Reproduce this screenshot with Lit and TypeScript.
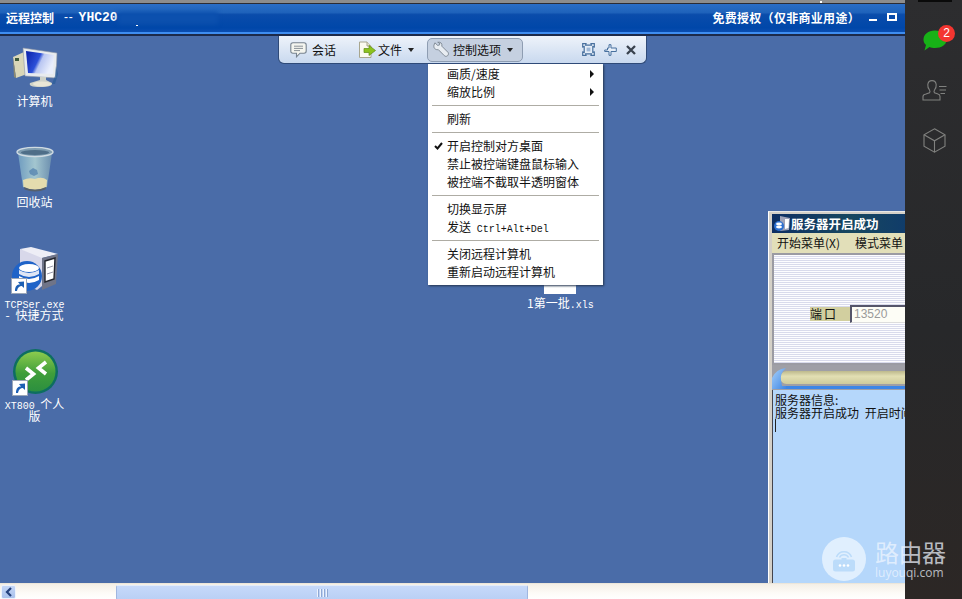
import { LitElement, html, css, svg } from "lit";
import { customElement } from "lit/decorators.js";

const shortcut = svg`
  <rect x="0.5" y="0.5" width="15" height="15" fill="#fff" stroke="#9aa6b8"/>
  <path d="M4 13 C4 8 6 6.5 9 6.5 L7 4 L13 3.5 L13 10 L10.8 8 C8.5 8 6.5 9.5 6 13 Z" fill="#1c5fb4"/>`;

const computerIcon = html`<svg width="46" height="42" viewBox="0 0 46 42">
  <defs>
    <linearGradient id="scr" x1="0" y1="0" x2="1" y2="0.4">
      <stop offset="0" stop-color="#0a1fa8"/><stop offset=".5" stop-color="#2c4fd8"/><stop offset=".62" stop-color="#b9c6f2"/><stop offset="1" stop-color="#e9eefc"/>
    </linearGradient>
  </defs>
  <path d="M1 11 L12 6 L15 28 L4 32 Z" fill="#d9d6b8"/>
  <path d="M1 11 L4 32 L2 31 Z" fill="#8d8a70"/>
  <rect x="3" y="12" width="4" height="3" fill="#3e5a3c"/>
  <path d="M11 2 L45 7 L44 32 L13 30 Z" fill="#e8ebee" stroke="#8d96a4" stroke-width=".6"/>
  <path d="M14 5 L42 9 L41 28 L16 27 Z" fill="url(#scr)"/>
  <path d="M28 31 L28 34 L18 37 Q16 41 28 41 Q41 41 40 37 L34 34 L34 31 Z" fill="#cfd2c8"/>
  <ellipse cx="30" cy="38" rx="9" ry="2.6" fill="#e9e6d6"/>
  <path d="M44 20 L46 28 L43 38 L40 38 L43 30 Z" fill="#2a5c98" opacity=".7"/>
</svg>`;

const binIcon = html`<svg width="38" height="47" viewBox="0 0 38 47">
  <defs>
    <linearGradient id="bin" x1="0" y1="0" x2="1" y2="0">
      <stop offset="0" stop-color="#6f9cc0"/><stop offset=".5" stop-color="#a3c6cf"/><stop offset="1" stop-color="#6b8eae"/>
    </linearGradient>
  </defs>
  <path d="M2 7 L7 41 Q19 47 31 41 L36 7 Z" fill="url(#bin)"/>
  <path d="M7 34 Q13 31 19 33 Q26 30 31 34 L30.5 41 Q19 47 7.5 41 Z" fill="#e4dcae"/>
  <path d="M8 41 Q19 46 30 41 L29.500 43.500 Q19 47.500 8.500 43.500 Z" fill="#56606c"/>
  <path d="M13 25 l4 -3 l4 2 l1 4 l-4 2 l-4 -2 Z" fill="#4f7dac" opacity=".7"/>
  <ellipse cx="19" cy="6" rx="18" ry="4.6" fill="#7f9db2" stroke="#d0dbe2" stroke-width="1.4"/>
  <ellipse cx="19" cy="6.5" rx="14" ry="2.6" fill="#4f6e88"/>
</svg>`;

const serverIcon = html`<svg width="50" height="50" viewBox="0 0 50 50">
  <path d="M11 3 L33 8 L33 40 L28 44 L11 36 Z" fill="#d8d8ea"/>
  <path d="M11 3 L22 1 L49 8 L33 12 Z" fill="#eeeef6"/>
  <path d="M33 12 L49 8 L47 38 L33 44 Z" fill="#6f7488"/>
  <path d="M36 15 L46 12 L45 33 L36 36 Z" fill="#fff" stroke="#23252e" stroke-width="1.4"/>
  <path d="M38 22 L44 20 M38 28 L44 26" stroke="#99a" stroke-width="1"/>
  <circle cx="18" cy="30" r="15" fill="#1f63c8"/>
  <ellipse cx="20" cy="22" rx="10" ry="4" fill="#fff"/>
  <path d="M10 24 Q20 30 30 24 V28 Q20 34 10 28 Z" fill="#dfe6f5"/>
  <path d="M10 30 Q20 36 30 30 V34 Q20 40 10 34 Z" fill="#fff"/>
  <g transform="translate(2 32)">${shortcut}</g>
</svg>`;

const xtIcon = html`<svg width="52" height="50" viewBox="0 0 52 50">
  <defs>
    <linearGradient id="xt" x1="0" y1="0" x2="0" y2="1">
      <stop offset="0" stop-color="#8ccb4e"/><stop offset=".55" stop-color="#3f9e3a"/><stop offset="1" stop-color="#2c8f3f"/>
    </linearGradient>
  </defs>
  <circle cx="27.500" cy="24.500" r="22.500" fill="#0d6e60"/>
  <circle cx="27.500" cy="24.500" r="20" fill="url(#xt)"/>
  <path d="M18 21 L25.500 27 L18 33" fill="none" stroke="#fff" stroke-width="3.600"/>
  <path d="M38 15 L30.500 21 L38 27" fill="none" stroke="#fff" stroke-width="3.600"/>
  <g transform="translate(4 33)">${shortcut}</g>
</svg>`;

const serverSmall = html`<svg width="17" height="17" viewBox="0 0 17 17">
  <path d="M6 1 L16 3 L15 15 L6 16 Z" fill="#9fa3b8"/>
  <path d="M11 4 L15 4 L14.5 13 L11 14 Z" fill="#fff"/>
  <circle cx="5" cy="11" r="5" fill="#2c6fd0"/>
  <ellipse cx="5" cy="9" rx="3" ry="1.4" fill="#fff"/>
  <ellipse cx="5" cy="12" rx="3" ry="1.4" fill="#fff"/>
</svg>`;

const chatIcon = html`<svg width="17" height="16" viewBox="0 0 17 16">
  <path d="M3 .8 H14 Q16.2 .8 16.2 3 V9 Q16.2 11.2 14 11.2 H10 L6.5 14.8 V11.2 H3 Q.8 11.2 .8 9 V3 Q.8 .8 3 .8 Z" fill="#f4f5ef" stroke="#77838f" stroke-width="1.1"/>
  <path d="M4 4.2 H13 M4 6.4 H13 M4 8.6 H10" stroke="#8a9298" stroke-width="1"/>
</svg>`;

const fileIcon = html`<svg width="18" height="18" viewBox="0 0 18 18">
  <path d="M1.5 1 H9 L13 5 V16.5 H1.5 Z" fill="#fbfaf0" stroke="#a8a68e"/>
  <path d="M9 1 V5 H13" fill="#e6e4d2" stroke="#a8a68e"/>
  <path d="M6 7.5 H11 V4.5 L17.5 9.5 L11 14.5 V11.5 H6 Z" fill="#8cc21e" stroke="#5e8c12" stroke-width=".7"/>
</svg>`;

const wrenchIcon = html`<svg width="16" height="17" viewBox="0 0 17 17">
  <path d="M2 1.4 L5 4.2 L7 3.6 L7 1.6 L5 .8 C8 .2 10 2 9.4 5 L16 11.6 C16.8 12.6 16.4 14.4 15.4 15.2 C14.4 16 12.8 16 12 15 L5.6 8.6 C2.6 9.2 .4 7 1 4 Z" fill="#e8edf2" stroke="#7d8792" stroke-width="1" stroke-linejoin="round"/>
</svg>`;

const fullIcon = html`<svg width="13" height="13" viewBox="0 0 13 13" fill="none" stroke="#48709e" stroke-width="1.2">
  <path d="M.7 .7 H4 L3.6 2.2 H9.4 L9 .7 H12.3 V4 L10.8 3.6 V9.4 L12.3 9 V12.3 H9 L9.4 10.8 H3.6 L4 12.3 H.7 V9 L2.2 9.4 V3.6 L.7 4 Z" fill="#e6eef8"/>
  <rect x="4.6" y="4.6" width="3.8" height="3.8" fill="#9db7d6" stroke="none"/>
</svg>`;

const pinIcon = html`<svg width="13" height="12" viewBox="0 0 13 12">
  <path d="M5 .7 H7 V4 H12.3 V7.5 H7 V11.3 H5 V7.5 L.7 7.5 V6 H3.5 V4 H5 Z" fill="#e6eef8" stroke="#48709e" stroke-width="1"/>
</svg>`;

const closeIcon = html`<svg width="10" height="10" viewBox="0 0 10 10">
  <path d="M1 1 L9 9 M9 1 L1 9" stroke="#39424e" stroke-width="2.3"/>
</svg>`;

const wechat = html`<svg width="24" height="21" viewBox="0 0 24 21">
  <path d="M12 .5 C19 .5 23.500 4.500 23.500 9.500 C23.500 15 18.500 18 12 18 C10 18 8 17.700 6.500 17 L1.500 20.500 L3 15 C1.200 13.500 .5 11.500 .5 9.500 C.5 4.500 5 .5 12 .5 Z" fill="#17b217"/>
</svg>`;

const contacts = html`<svg width="25" height="21" viewBox="0 0 25 21" fill="none" stroke="#80817f" stroke-width="1.1">
  <path d="M1 20 V16.500 Q1 14.500 4 14 L7.500 12.800 Q8.500 11.500 7.500 10 Q5.500 7.500 5.800 4.500 Q6.300 .6 10 .6 Q13.700 .6 14.200 4.500 Q14.500 7.500 12.500 10 Q11.500 11.500 12.500 12.800 L16 14 Q18 14.500 18 16.500 V20 Z"/>
  <path d="M17 6.500 H24.500 M17.500 10 H24 M18.500 13.500 H23"/>
</svg>`;

const cube = html`<svg width="23" height="25" viewBox="0 0 23 25" fill="none" stroke="#80817f" stroke-width="1.1">
  <path d="M11.500 .8 L22 6.800 V18.200 L11.500 24.200 L1 18.200 V6.800 Z"/>
  <path d="M1 6.800 L11.500 12.800 L22 6.800 M11.500 12.800 V24.200"/>
</svg>`;

const routerIcon = html`<svg width="28" height="28" viewBox="0 0 28 28" fill="none">
  <path d="M6.500 12 A8 8 0 0 1 21.500 12 M9.500 12.500 A5 5 0 0 1 18.500 12.500" stroke="#bcdcfa" stroke-width="1.600"/>
  <path d="M11.500 13 H16.500 V15 H11.500 Z" fill="#bcdcfa"/>
  <rect x="3" y="14.500" width="22" height="12" rx="2.500" fill="#bcdcfa"/>
  <circle cx="10" cy="20.500" r="1.300" fill="#fff"/><circle cx="14" cy="20.500" r="1.300" fill="#fff"/><circle cx="18" cy="20.500" r="1.300" fill="#fff"/>
</svg>`;

type MenuEntry = { sep: true } | { t: string; arrow?: boolean; check?: boolean; latin?: string };
const MENU: MenuEntry[] = [
  { t: "画质/速度", arrow: true },
  { t: "缩放比例", arrow: true },
  { sep: true },
  { t: "刷新" },
  { sep: true },
  { t: "开启控制对方桌面", check: true },
  { t: "禁止被控端键盘鼠标输入" },
  { t: "被控端不截取半透明窗体" },
  { sep: true },
  { t: "切换显示屏" },
  { t: "发送", latin: "Ctrl+Alt+Del" },
  { sep: true },
  { t: "关闭远程计算机" },
  { t: "重新启动远程计算机" },
];

const mono = (s: string) => html`<span class="mono">${s}</span>`;

const DESKTOP = [
  { ix: 12, y: 46, icon: computerIcon, lines: [html`计算机`], ly: 95 },
  { ix: 16, y: 146, icon: binIcon, lines: [html`回收站`], ly: 196 },
  { ix: 9, y: 246, icon: serverIcon, lines: [mono("TCPSer.exe"), html`- 快捷方式`], ly: 297 },
  { ix: 8, y: 347, icon: xtIcon, lines: [html`${mono("XT800")} 个人`, html`版`], ly: 398 },
];

@customElement("app-root")
export class AppRoot extends LitElement {
  static styles = css`
    :host { display: block; width: 962px; height: 599px; overflow: hidden; font-family: "Noto Sans CJK SC", "Liberation Sans", sans-serif; }
    .root { display: flex; width: 962px; height: 599px; position: relative; }
    .main { width: 905px; height: 599px; display: flex; flex-direction: column; position: relative; overflow: hidden; }
    .strip { height: 3px; background: #8d8d8d; border-bottom: 1px solid #2c2c34; flex: none; position: relative; }
    .strip::after { content: ""; position: absolute; left: 820px; top: 1px; width: 2px; height: 2px; background: #fff; }
    .titlebar {
      height: 30px; flex: none; display: flex; align-items: center; justify-content: space-between;
      padding: 0 8px 2px 6px; box-sizing: border-box; color: #fff; font-weight: 700; font-size: 12px;
      background: linear-gradient(#2b6ec6 0, #1f63bb 30%, #0a4cab 38%, #0047a9 85%, #0a4db0 100%);
      border-bottom: 2px solid #3f8df0; position: relative;
    }
    .underline { height: 2px; flex: none; background: #1c2a4a; }
    .smudge { position: absolute; left: 118px; top: 8px; width: 100px; height: 12px; background: #0c50ae; filter: blur(2px); }
    .speck { position: absolute; left: 136px; top: 21px; width: 2px; height: 1px; background: #fff; }
    .title-left { display: flex; align-items: center; }
    .dash { margin-left: 10px; font-family: "Liberation Sans", sans-serif; font-size: 12px; font-weight: 400; letter-spacing: .8px; }
    .yhc { margin-left: 5px; font-family: "Liberation Mono", monospace; font-size: 13px; }
    .title-right { display: flex; align-items: center; gap: 9px; }
    .title-right span { letter-spacing: .3px; }
    .winbtn { display: flex; align-items: center; gap: 10px; }
    .min { width: 8px; height: 2px; background: #fff; margin-top: 5px; }
    .max { width: 6px; height: 4px; border: 2px solid #fff; }
    .desktop { flex: 1; background: #4a6ca8; }
    .dimg { position: absolute; }
    .dlabel { position: absolute; left: 0; width: 69px; text-align: center; color: #fff; font-size: 12px; }
    .dline { height: 12px; line-height: 12px; white-space: pre; word-spacing: 3px; }
    .mono { font-family: "Liberation Mono", monospace; font-size: 10px; }
    .toolbar {
      position: absolute; left: 278px; top: 36px; width: 369px; height: 28px; box-sizing: border-box;
      background: linear-gradient(#eef3fa, #c9d9ef); border: 1px solid #2f4a78; border-top: 0;
      border-radius: 0 0 6px 6px; display: flex; align-items: center; padding: 0 10px 0 11px; font-size: 12px; color: #111;
    }
    .tool { display: flex; align-items: center; gap: 5px; }
    .tool.chat { width: 68px; }
    .tool.file { width: 69px; gap: 2px; }
    .tool.ctrl {
      width: 96px; height: 24px; box-sizing: border-box; padding-left: 5px; gap: 4px;
      background: #c5d0e0; border: 1px solid #8e9db2; border-radius: 5px;
    }
    .caret { width: 0; height: 0; border-left: 3.500px solid transparent; border-right: 3.500px solid transparent; border-top: 4px solid #222; margin-left: 4px; margin-top: 1px; }
    .ctrl .caret { margin-left: 2px; }
    .tool-right { margin-left: auto; display: flex; align-items: center; gap: 9px; }
    .menu {
      position: absolute; left: 428px; top: 64px; width: 175px; height: 221px; box-sizing: border-box;
      background: #fff; padding: 1px 4px 0 4px; font-size: 12px; color: #111;
      box-shadow: 1px 1px 2px #25364f;
    }
    .mi { height: 18px; position: relative; padding-left: 15px; line-height: 18px; white-space: pre; }
    .mi .mono { margin-left: 3px; }
    .sep { height: 9px; display: flex; align-items: center; }
    .sep::before { content: ""; height: 1px; flex: 1; background: #aeaca4; }
    .arrow { position: absolute; right: 5px; top: 5px; width: 0; height: 0; border-top: 4px solid transparent; border-bottom: 4px solid transparent; border-left: 4px solid #111; }
    .check { position: absolute; left: 2px; top: 5px; }
    .xl-icon { position: absolute; left: 544px; top: 285px; width: 32px; height: 9px; background: #fff; }
    .xl-label { position: absolute; left: 527px; top: 297px; color: #fff; font-size: 12px; line-height: 12px; white-space: pre; }
    .win {
      position: absolute; left: 768px; top: 211px; width: 137px; height: 372px; box-sizing: border-box; overflow: hidden;
      background: #d4d0c8; padding: 3px 0 0 3px; border-left: 1px solid #fff; border-top: 1px solid #e8e8e8; display: flex; flex-direction: column; white-space: nowrap;
    }
    .w-title { height: 19px; flex: none; display: flex; align-items: center; gap: 0; padding-left: 2px; margin-top: -1px; color: #fff; font-weight: 700; font-size: 12.500px; background: linear-gradient(90deg, #0e2f63, #17475f 60%, #103c6a); }
    .w-menu { height: 20px; flex: none; display: flex; align-items: center; gap: 15px; padding: 0 0 2px 5px; box-sizing: border-box; background: #e2dfb9; font-size: 12px; color: #111; }
    .w-panel { height: 112px; flex: none; box-sizing: border-box; border: 2px solid #9b9ba3; border-right: 0; display: flex; align-items: center; padding: 10px 0 0 36px; font-size: 12px;
      background: repeating-linear-gradient(#fdfdff 0 1px, #d9dbec 1px 2px); }
    .w-label { width: 40px; height: 14px; line-height: 14px; background: #d2cf9f; color: #111; letter-spacing: 2px; flex: none; }
    .w-input { flex: 1; height: 18px; box-sizing: border-box; background: #fdfdf6; border-left: 2px solid #55556a; border-top: 2px solid #55556a; border-bottom: 1px solid #ddd; font-family: "Liberation Sans", sans-serif; font-size: 12px; line-height: 15px; color: #9a9a9a; padding-left: 2px; }
    .w-prog { height: 25px; flex: none; position: relative; background: #9f9fa6; }
    .w-pill { position: absolute; left: 8px; right: -10px; top: 6px; height: 13px; border-radius: 7px; background: linear-gradient(#bdb98c, #e2dfb3 40%, #cfcb9c); }
    .w-curve { position: absolute; left: 0; top: 1px; }
    .w-blue { position: absolute; left: 0; right: 0; bottom: 1px; height: 3px; background: #3d86e6; }
    .w-text { flex: 1; background: #b5d7fb; padding: 3px 0 0 2px; font-size: 12px; line-height: 13px; color: #111; border-left: 1px solid #44444c; }
    .w-gap { margin-left: 3px; }
    .w-caret { width: 1px; height: 13px; background: #222; }
    .scroll { height: 16px; flex: none; box-sizing: border-box; background: linear-gradient(#f4efe6, #fdfbf7 60%, #fff); border-top: 1px solid #ece6da; display: flex; padding-top: 1px; }
    .sb-btn { width: 15px; height: 14px; margin-left: 1px; border-radius: 2px; background: linear-gradient(#c4d6f6, #a9c1ec); border: 1px solid #eef3fc; box-sizing: border-box; display: flex; align-items: center; justify-content: center; flex: none; }
    .sb-thumb { width: 412px; height: 15px; margin-left: 100px; box-sizing: border-box; border: 1px solid #9fb6e0; border-top-color: #e3ecfa; border-radius: 2px; background: linear-gradient(#c6d9fa, #bad0f5); display: flex; align-items: center; justify-content: center; gap: 1px; flex: none; }
    .sb-thumb i { display: block; width: 1px; height: 8px; background: #eef3fc; box-shadow: 1px 0 #8fa8d4; margin-right: 1px; }
    .side { width: 57px; height: 599px; background: linear-gradient(#2d2d2f, #27282a 55%, #2c2725); position: relative; flex: none; }
    .avatar { position: absolute; left: 13px; top: 0; width: 34px; height: 2px; background: #0a0a0a; }
    .s-chat { position: absolute; left: 18px; top: 30px; }
    .s-badge { position: absolute; left: 33px; top: 25px; width: 17px; height: 17px; border-radius: 50%; background: #f43530; color: #fff; font-family: "Liberation Sans", sans-serif; font-size: 12px; line-height: 17px; text-align: center; }
    .s-con { position: absolute; left: 17px; top: 80px; }
    .s-cube { position: absolute; left: 18px; top: 128px; }
    .wm { position: absolute; left: 822px; top: 537px; display: flex; align-items: center; gap: 9px; }
    .wm-c { width: 44px; height: 44px; border-radius: 50%; background: rgba(235,245,255,.8); display: flex; align-items: center; justify-content: center; }
    .wm-t { display: flex; flex-direction: column; color: rgba(240,246,255,.72); }
    .wm-a { font-size: 24px; line-height: 28px; letter-spacing: -.500px; }
    .wm-b { font-family: "Open Sans", sans-serif; font-size: 12px; line-height: 14px; }
  `;

  render() {
    return html`<div class="root">
      <div class="main">
        <div class="strip"></div>
        <div class="titlebar">
          <div class="title-left"><span>远程控制</span><span class="dash">--</span><span class="yhc">YHC20</span></div>
          <div class="smudge"></div>
          <div class="speck"></div>
          <div class="title-right">
            <span>免费授权（仅非商业用途）</span>
            <div class="winbtn"><div class="min"></div><div class="max"></div></div>
          </div>
        </div>
        <div class="underline"></div>
        <div class="desktop"></div>
        <div class="scroll">
          <div class="sb-btn"><svg width="8" height="10" viewBox="0 0 8 10"><path d="M6 1 L2 5 L6 9" fill="none" stroke="#24407c" stroke-width="2.200"/></svg></div>
          <div class="sb-thumb"><i></i><i></i><i></i><i></i></div>
        </div>

        ${DESKTOP.map(d => html`
          <div class="dimg" style="left:${d.ix}px;top:${d.y}px;">${d.icon}</div>
          <div class="dlabel" style="top:${d.ly}px;">${d.lines.map(l => html`<div class="dline">${l}</div>`)}</div>
        `)}

        <div class="xl-icon"></div>
        <div class="xl-label">1第一批<span class="mono">.xls</span></div>

        <div class="win">
          <div class="w-title">${serverSmall}<span>服务器开启成功</span></div>
          <div class="w-menu"><span>开始菜单(X)</span><span>模式菜单</span></div>
          <div class="w-panel"><div class="w-label">端口</div><div class="w-input">13520</div></div>
          <div class="w-prog">
            <div class="w-pill"></div>
            <div class="w-blue"></div>
            <svg class="w-curve" width="14" height="24" viewBox="0 0 14 24"><defs><linearGradient id="cv" x1="0" y1="0" x2="1" y2="1"><stop offset="0" stop-color="#a8d0f8"/><stop offset="1" stop-color="#3d86e6"/></linearGradient></defs><path d="M0 23 V12 Q4 3 14 2 Q8 7 9 14 L10 20 H14 V23 Z" fill="url(#cv)"/></svg>
          </div>
          <div class="w-text">服务器信息:<br>服务器开启成功 <span class="w-gap">开启时间</span><div class="w-caret"></div></div>
        </div>

        <div class="menu">
          ${MENU.map(m => "sep" in m ? html`<div class="sep"></div>` : html`<div class="mi">${m.check ? html`<svg class="check" width="9" height="8" viewBox="0 0 9 8"><path d="M1 4 L3.500 6.500 L8 1" fill="none" stroke="#111" stroke-width="2"/></svg>` : ""}${m.t}${m.latin ? html` <span class="mono">${m.latin}</span>` : ""}${m.arrow ? html`<div class="arrow"></div>` : ""}</div>`)}
        </div>

        <div class="toolbar">
          <div class="tool chat">${chatIcon}<span>会话</span></div>
          <div class="tool file">${fileIcon}<span>文件</span><div class="caret"></div></div>
          <div class="tool ctrl">${wrenchIcon}<span>控制选项</span><div class="caret"></div></div>
          <div class="tool-right">${fullIcon}${pinIcon}${closeIcon}</div>
        </div>
      </div>
      <div class="side">
        <div class="avatar"></div>
        <div class="s-chat">${wechat}</div>
        <div class="s-badge">2</div>
        <div class="s-con">${contacts}</div>
        <div class="s-cube">${cube}</div>
      </div>
      <div class="wm"><div class="wm-c">${routerIcon}</div><div class="wm-t"><div class="wm-a">路由器</div><div class="wm-b">luyouqi.com</div></div></div>
    </div>`;
  }
}
